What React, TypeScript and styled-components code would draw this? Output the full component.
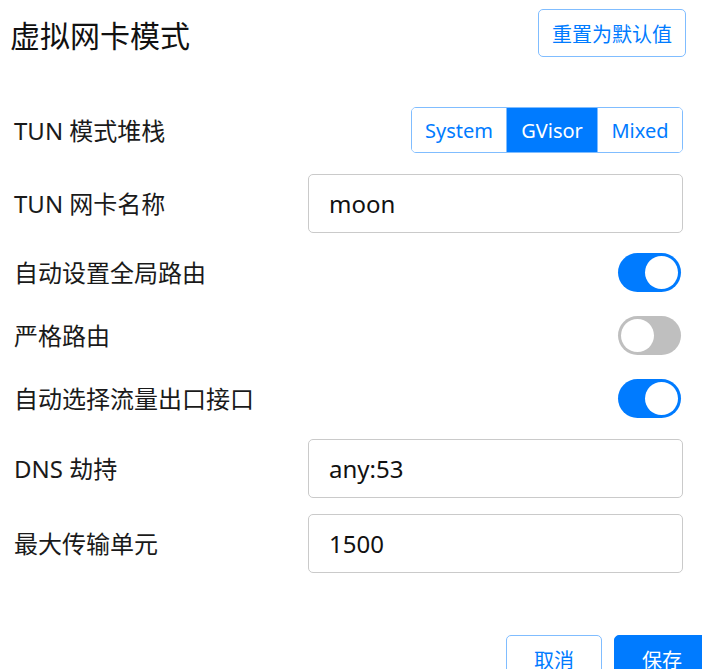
import React, { useState } from "react";
import styled, { createGlobalStyle } from "styled-components";

const GlobalStyle = createGlobalStyle`
  html, body { margin: 0; padding: 0; background: #fff; overflow: hidden; }
  body {
    font-family: "Noto Sans", "Noto Sans CJK SC", sans-serif;
    color: #212529;
  }
  * { box-sizing: border-box; }
`;

const Page = styled.div`
  width: 702px;
  height: 669px;
  overflow: hidden;
`;

const Header = styled.div`
  display: flex;
  align-items: center;
  justify-content: space-between;
  padding: 9px 16px 0 10px;
  height: 57px;
`;

const Title = styled.h1`
  margin: 0;
  font-size: 30px;
  font-weight: 400;
  color: #111;
  line-height: 1;
  padding-top: 6px;
`;

const OutlineButton = styled.button`
  height: 48px;
  padding: 0 13px;
  border: 1px solid #80bdff;
  border-radius: 5px;
  background: #fff;
  color: #007bff;
  font-family: inherit;
  font-size: 20px;
  cursor: pointer;
`;

const Body = styled.div`
  padding: 0 19px 0 14px;
`;

const Row = styled.div<{ $mt: number; $h: number }>`
  display: flex;
  align-items: center;
  justify-content: space-between;
  margin-top: ${(p) => p.$mt}px;
  height: ${(p) => p.$h}px;
`;

const Label = styled.span`
  font-size: 24px;
  color: #1a1a1a;
  margin-top: -2px;
`;

const Segmented = styled.div`
  display: flex;
  height: 46px;
  border: 1px solid #80bdff;
  border-radius: 5px;
  overflow: hidden;
`;

const Segment = styled.button<{ $active: boolean; $w: number }>`
  width: ${(p) => p.$w}px;
  border: none;
  border-left: 1px solid #80bdff;
  &:first-child { border-left: none; }
  background: ${(p) => (p.$active ? "#007bff" : "#fff")};
  color: ${(p) => (p.$active ? "#fff" : "#007bff")};
  font-family: inherit;
  font-size: 20px;
  padding: 0;
  cursor: pointer;
`;

const Input = styled.input`
  width: 375px;
  height: 59px;
  border: 1px solid #cacaca;
  border-radius: 5px;
  padding: 0 20px;
  font-family: inherit;
  font-size: 24px;
  color: #111;
  outline: none;
`;

const Track = styled.button<{ $on: boolean }>`
  position: relative;
  width: 63px;
  height: 39px;
  border-radius: 20px;
  border: none;
  padding: 0;
  margin-right: 2px;
  background: ${(p) => (p.$on ? "#007bff" : "#bfbfbf")};
  cursor: pointer;
`;

const Knob = styled.span<{ $on: boolean }>`
  position: absolute;
  top: 3px;
  left: ${(p) => (p.$on ? "27px" : "3px")};
  width: 33px;
  height: 33px;
  border-radius: 50%;
  background: #fff;
`;

const Footer = styled.div`
  display: flex;
  justify-content: flex-end;
  gap: 12px;
  margin-top: 62px;
  margin-right: -27px;
`;

const FooterButton = styled.button<{ $primary?: boolean }>`
  width: 96px;
  height: 48px;
  border-radius: 5px;
  border: 1px solid ${(p) => (p.$primary ? "#007bff" : "#80bdff")};
  background: ${(p) => (p.$primary ? "#007bff" : "#fff")};
  color: ${(p) => (p.$primary ? "#fff" : "#007bff")};
  font-family: inherit;
  font-size: 20px;
  cursor: pointer;
`;

const Toggle: React.FC<{ on: boolean; onChange: () => void }> = ({ on, onChange }) => (
  <Track $on={on} onClick={onChange}>
    <Knob $on={on} />
  </Track>
);

export default function App() {
  const [stack, setStack] = useState("GVisor");
  const [autoRoute, setAutoRoute] = useState(true);
  const [strict, setStrict] = useState(false);
  const [autoDetect, setAutoDetect] = useState(true);
  const stacks: [string, number][] = [
    ["System", 94],
    ["GVisor", 91],
    ["Mixed", 85],
  ];
  return (
    <Page>
      <GlobalStyle />
      <Header>
        <Title>虚拟网卡模式</Title>
        <OutlineButton>重置为默认值</OutlineButton>
      </Header>
      <Body>
        <Row $mt={50} $h={46}>
          <Label>TUN 模式堆栈</Label>
          <Segmented>
            {stacks.map(([s, w]) => (
              <Segment key={s} $w={w} $active={stack === s} onClick={() => setStack(s)}>
                {s}
              </Segment>
            ))}
          </Segmented>
        </Row>
        <Row $mt={21} $h={59}>
          <Label>TUN 网卡名称</Label>
          <Input defaultValue="moon" />
        </Row>
        <Row $mt={20} $h={39}>
          <Label>自动设置全局路由</Label>
          <Toggle on={autoRoute} onChange={() => setAutoRoute(!autoRoute)} />
        </Row>
        <Row $mt={24} $h={39}>
          <Label>严格路由</Label>
          <Toggle on={strict} onChange={() => setStrict(!strict)} />
        </Row>
        <Row $mt={24} $h={39}>
          <Label>自动选择流量出口接口</Label>
          <Toggle on={autoDetect} onChange={() => setAutoDetect(!autoDetect)} />
        </Row>
        <Row $mt={21} $h={59}>
          <Label>DNS 劫持</Label>
          <Input defaultValue="any:53" />
        </Row>
        <Row $mt={16} $h={59}>
          <Label>最大传输单元</Label>
          <Input defaultValue="1500" />
        </Row>
        <Footer>
          <FooterButton>取消</FooterButton>
          <FooterButton $primary>保存</FooterButton>
        </Footer>
      </Body>
    </Page>
  );
}
